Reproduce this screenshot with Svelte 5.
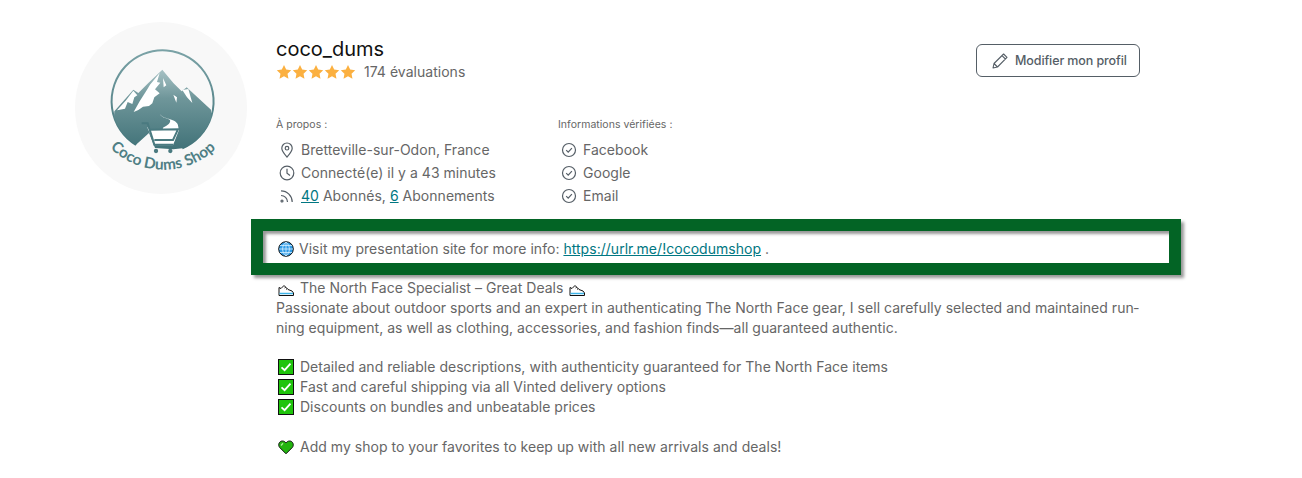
<script>
  const stars = [0, 1, 2, 3, 4];
  const checks = [
    'Detailed and reliable descriptions, with authenticity guaranteed for The North Face items',
    'Fast and careful shipping via all Vinted delivery options',
    'Discounts on bundles and unbeatable prices'
  ];
  const verified = ['Facebook', 'Google', 'Email'];
</script>

{#snippet check()}
  <svg class="emoji" viewBox="0 0 16 16" aria-hidden="true">
    <rect x="0.5" y="0.5" width="15" height="15" fill="#1fc40c" stroke="#111" />
    <path d="M3.5 8.3 6.6 11.2 12.5 4.6" fill="none" stroke="#fff" stroke-width="1.8" />
  </svg>
{/snippet}

{#snippet shoe()}
  <svg class="emoji shoe" viewBox="0 0 16 16" aria-hidden="true">
    <path d="M1 6.500 3 7.500 6 4.500 10 8.500 14 10 15.500 12V14.500H1Z" fill="#fff" stroke="#111" stroke-width="1" />
    <path d="M1.500 12.500H15" stroke="#3fb4e8" stroke-width="1.500" />
    <path d="M6.500 7 8 6M8 8.500 9.500 7.500" stroke="#111" stroke-width="0.800" />
  </svg>
{/snippet}

<div class="page">
  <div class="avatar">
    <svg viewBox="-90 -98 516 516" width="172" height="172" role="img" aria-label="Coco Dums Shop">
      <defs>
        <linearGradient id="mt" gradientUnits="userSpaceOnUse" x1="0" y1="45" x2="0" y2="290">
          <stop offset="0" stop-color="#a7c2c5" />
          <stop offset="0.35" stop-color="#6f969a" />
          <stop offset="1" stop-color="#3f7177" />
        </linearGradient>
        <linearGradient id="ring" gradientUnits="userSpaceOnUse" x1="0" y1="-10" x2="0" y2="290">
          <stop offset="0" stop-color="#7aa2a6" />
          <stop offset="1" stop-color="#3f7177" />
        </linearGradient>
        <path id="arc" d="M15 280A229 229 0 0 0 335 280" />
      </defs>
      <path d="M93 270.500A153 153 0 1 1 232 281" fill="none" stroke="url(#ring)" stroke-width="6" />
      <path d="M27 186 28 170 85 105 100 115 130 85 172 45 205 85 230 110 245 98 318 165 318 190A153 153 0 0 1 232 281L205 284 150 280 132 235 93 270.500A153 153 0 0 1 27 186Z" fill="url(#mt)" />
      <path d="M36 167 62 138 85 108 97 122 88 128 82 148 68 142 60 162ZM86 172 104 140 126 105 135 90 164 55 156 82 166 84 150 104 164 116 148 128 142 146 132 154 114 156 100 166ZM205 120 216 128 214 144ZM232 106 250 103 262 145 246 128ZM174 70 184 92 176 98Z" fill="#fff" />
      <path d="M164 177C172 195 204 188 194 204 188 216 166 216 176 226H222C218 212 222 210 210 200 200 193 170 190 164 177Z" fill="#fff" />
      <path d="M126 216 135 226 222 226 204 272 150 272Z" fill="#fff" />
      <path d="M110 206H128L148 270H205M136 225 219 224 204 256H148" fill="none" stroke="#4a7a80" stroke-width="6" />
      <circle cx="153" cy="289" r="6.500" fill="#4a7a80" />
      <circle cx="196" cy="289" r="6.500" fill="#4a7a80" />
      <text class="logo-text"><textPath href="#arc" textLength="352">Coco Dums Shop</textPath></text>
    </svg>
  </div>

  <div class="content">
    <header class="head">
      <div>
        <h1>coco_dums</h1>
        <div class="rating">
          <span class="stars">
            {#each stars as s (s)}
              <svg viewBox="0 0 24 24" width="16" height="16" aria-hidden="true">
                <path d="M12 1.500 15.300 8.400 22.800 9.300 17.300 14.500 18.700 22 12 18.300 5.300 22 6.700 14.500 1.200 9.300 8.700 8.400Z" fill="#fbb040" />
              </svg>
            {/each}
          </span>
          <span>174 évaluations</span>
        </div>
      </div>
      <button class="edit">
        <svg viewBox="0 0 18 18" width="18" height="18" aria-hidden="true">
          <path d="M2 16 3 11.500 12.600 2 16 5.400 6.500 15Z M3 11.500 6.500 15 M11 3.600 14.400 7" fill="none" stroke="#555e66" stroke-width="1.100" stroke-linejoin="round" />
        </svg>
        Modifier mon profil
      </button>
    </header>

    <div class="info">
      <section class="col-about">
        <h2>À propos :</h2>
        <ul>
          <li>
            <svg class="ic" viewBox="0 0 16 16" aria-hidden="true">
              <path d="M8 15C5.200 11.800 2.800 9.200 2.800 6.200A5.200 5.200 0 0 1 13.200 6.200C13.200 9.200 10.800 11.800 8 15Z" />
              <circle cx="8" cy="6.200" r="1.800" />
            </svg>
            Bretteville-sur-Odon, France
          </li>
          <li>
            <svg class="ic" viewBox="0 0 16 16" aria-hidden="true">
              <circle cx="8" cy="8" r="6.800" />
              <path d="M8 3.800V8.300L11 10.600" />
            </svg>
            Connecté(e) il y a 43 minutes
          </li>
          <li>
            <svg class="ic" viewBox="0 0 16 16" aria-hidden="true">
              <path d="M2 7.500A6.500 6.500 0 0 1 8.500 14M2 2.800A11.200 11.200 0 0 1 13.200 14" />
              <circle cx="3" cy="13" r="1" />
            </svg>
            <span><a href="#a">40</a> Abonnés, <a href="#b">6</a> Abonnements</span>
          </li>
        </ul>
      </section>
      <section>
        <h2>Informations vérifiées :</h2>
        <ul>
          {#each verified as v (v)}
            <li>
              <svg class="ic" viewBox="0 0 16 16" aria-hidden="true">
                <circle cx="8" cy="8" r="6.500" />
                <path d="M5.200 8.200 7.200 10.200 10.900 6.100" />
              </svg>
              {v}
            </li>
          {/each}
        </ul>
      </section>
    </div>

    <div class="callout">
      <svg class="emoji globe" viewBox="0 0 16 16" aria-hidden="true">
        <circle cx="8" cy="8" r="7.300" fill="#2f9be6" stroke="#111" />
        <path d="M8 1V15M1 8H15M2 4.500H14M2 11.500H14M8 1C3.500 4.500 3.500 11.500 8 15M8 1C12.500 4.500 12.500 11.500 8 15" fill="none" stroke="#d6efff" stroke-width="0.800" />
      </svg>
      Visit my presentation site for more info: <a href="#c">https://urlr.me/!cocodumshop</a> .
    </div>

    <div class="bio">
      <p>{@render shoe()} The North Face Specialist – Great Deals {@render shoe()}</p>
      <p>Passionate about outdoor sports and an expert in authenticating The North Face gear, I sell carefully selected and maintained run&shy;ning equipment, as well as clothing, accessories, and fashion finds—all guaranteed authentic.</p>
      <div class="gap-small">
        {#each checks as c (c)}
          <p>{@render check()} {c}</p>
        {/each}
      </div>
      <p class="gap">
        <svg class="emoji" viewBox="0 0 16 16" aria-hidden="true">
          <path d="M8 14.800 1.600 8.400C-.4 5.800 1.200 2 4.400 2 6 2 7.200 2.800 8 4 8.800 2.800 10 2 11.600 2 14.800 2 16.400 5.800 14.400 8.400Z" fill="#22b40f" stroke="#111" />
          <path d="M3 6.500 5 4.300" stroke="#a6ec95" stroke-width="1.300" />
        </svg>
        Add my shop to your favorites to keep up with all new arrivals and deals!
      </p>
    </div>
  </div>
</div>

<style>
  :global(body) {
    margin: 0;
    background: #fff;
  }
  .page {
    display: flex;
    align-items: flex-start;
    gap: 29px;
    padding: 22px 0 0 75px;
    font-family: Inter, "Liberation Sans", sans-serif;
    font-size: 14px;
    line-height: 20px;
    color: #666;
    letter-spacing: 0.03px;
  }
  .avatar {
    flex: none;
    width: 172px;
    height: 172px;
    border-radius: 50%;
    background: #f8f8f8;
    overflow: hidden;
  }
  .avatar svg {
    display: block;
  }
  .logo-text {
    font: 700 46px Lato, sans-serif;
    fill: #4f7f85;
  }
  .content {
    width: 869px;
  }
  .head {
    display: flex;
    justify-content: space-between;
    align-items: flex-start;
    padding-top: 15px;
    height: 77px;
  }
  h1 {
    margin: 0;
    font-size: 20px;
    line-height: 24px;
    font-weight: 400;
    color: #111;
    letter-spacing: 0;
  }
  .rating {
    display: flex;
    align-items: center;
    gap: 8px;
    height: 22px;
  }
  .stars {
    display: flex;
  }
  .stars svg {
    display: block;
  }
  .edit {
    display: flex;
    align-items: center;
    gap: 6px;
    box-sizing: border-box;
    width: 164px;
    height: 33px;
    margin: 7px 5px 0 0;
    padding: 0 0 0 14px;
    background: #fff;
    border: 1px solid #555e66;
    border-radius: 6px;
    font: 500 12.500px Inter, sans-serif;
    color: #555e66;
    letter-spacing: -0.1px;
  }
  .info {
    display: flex;
  }
  .col-about {
    width: 282px;
  }
  h2 {
    margin: 1px 0 3px;
    font-size: 10.500px;
    line-height: 20px;
    font-weight: 400;
    color: #666;
  }
  ul {
    list-style: none;
    margin: 0;
    padding: 0;
  }
  li {
    display: flex;
    align-items: center;
    gap: 6px;
    height: 23px;
    padding-left: 3px;
  }
  .ic {
    flex: none;
    width: 16px;
    height: 16px;
    fill: none;
    stroke: #555e66;
    stroke-width: 1.200;
  }
  .callout {
    margin: 12px -36px 0 -25px;
    padding: 8px 13px 4px;
    height: 20px;
    background: #fff;
    border: 12px solid #036425;
    box-shadow: 3px 3px 3px #999, inset 3px 3px 3px #999;
    white-space: nowrap;
  }
  a {
    color: #007782;
    text-decoration: underline;
  }
  .emoji {
    display: inline-block;
    width: 16px;
    height: 16px;
    vertical-align: -3px;
    margin: 0 2px 0 2px;
  }
  .globe {
    margin-right: 1px;
  }
  .shoe {
    vertical-align: -4px;
  }
  .bio {
    margin-top: 3px;
  }
  .bio p {
    margin: 0;
  }
  .gap-small {
    margin-top: 19px;
  }
  .bio .gap {
    margin-top: 20px;
  }
</style>
